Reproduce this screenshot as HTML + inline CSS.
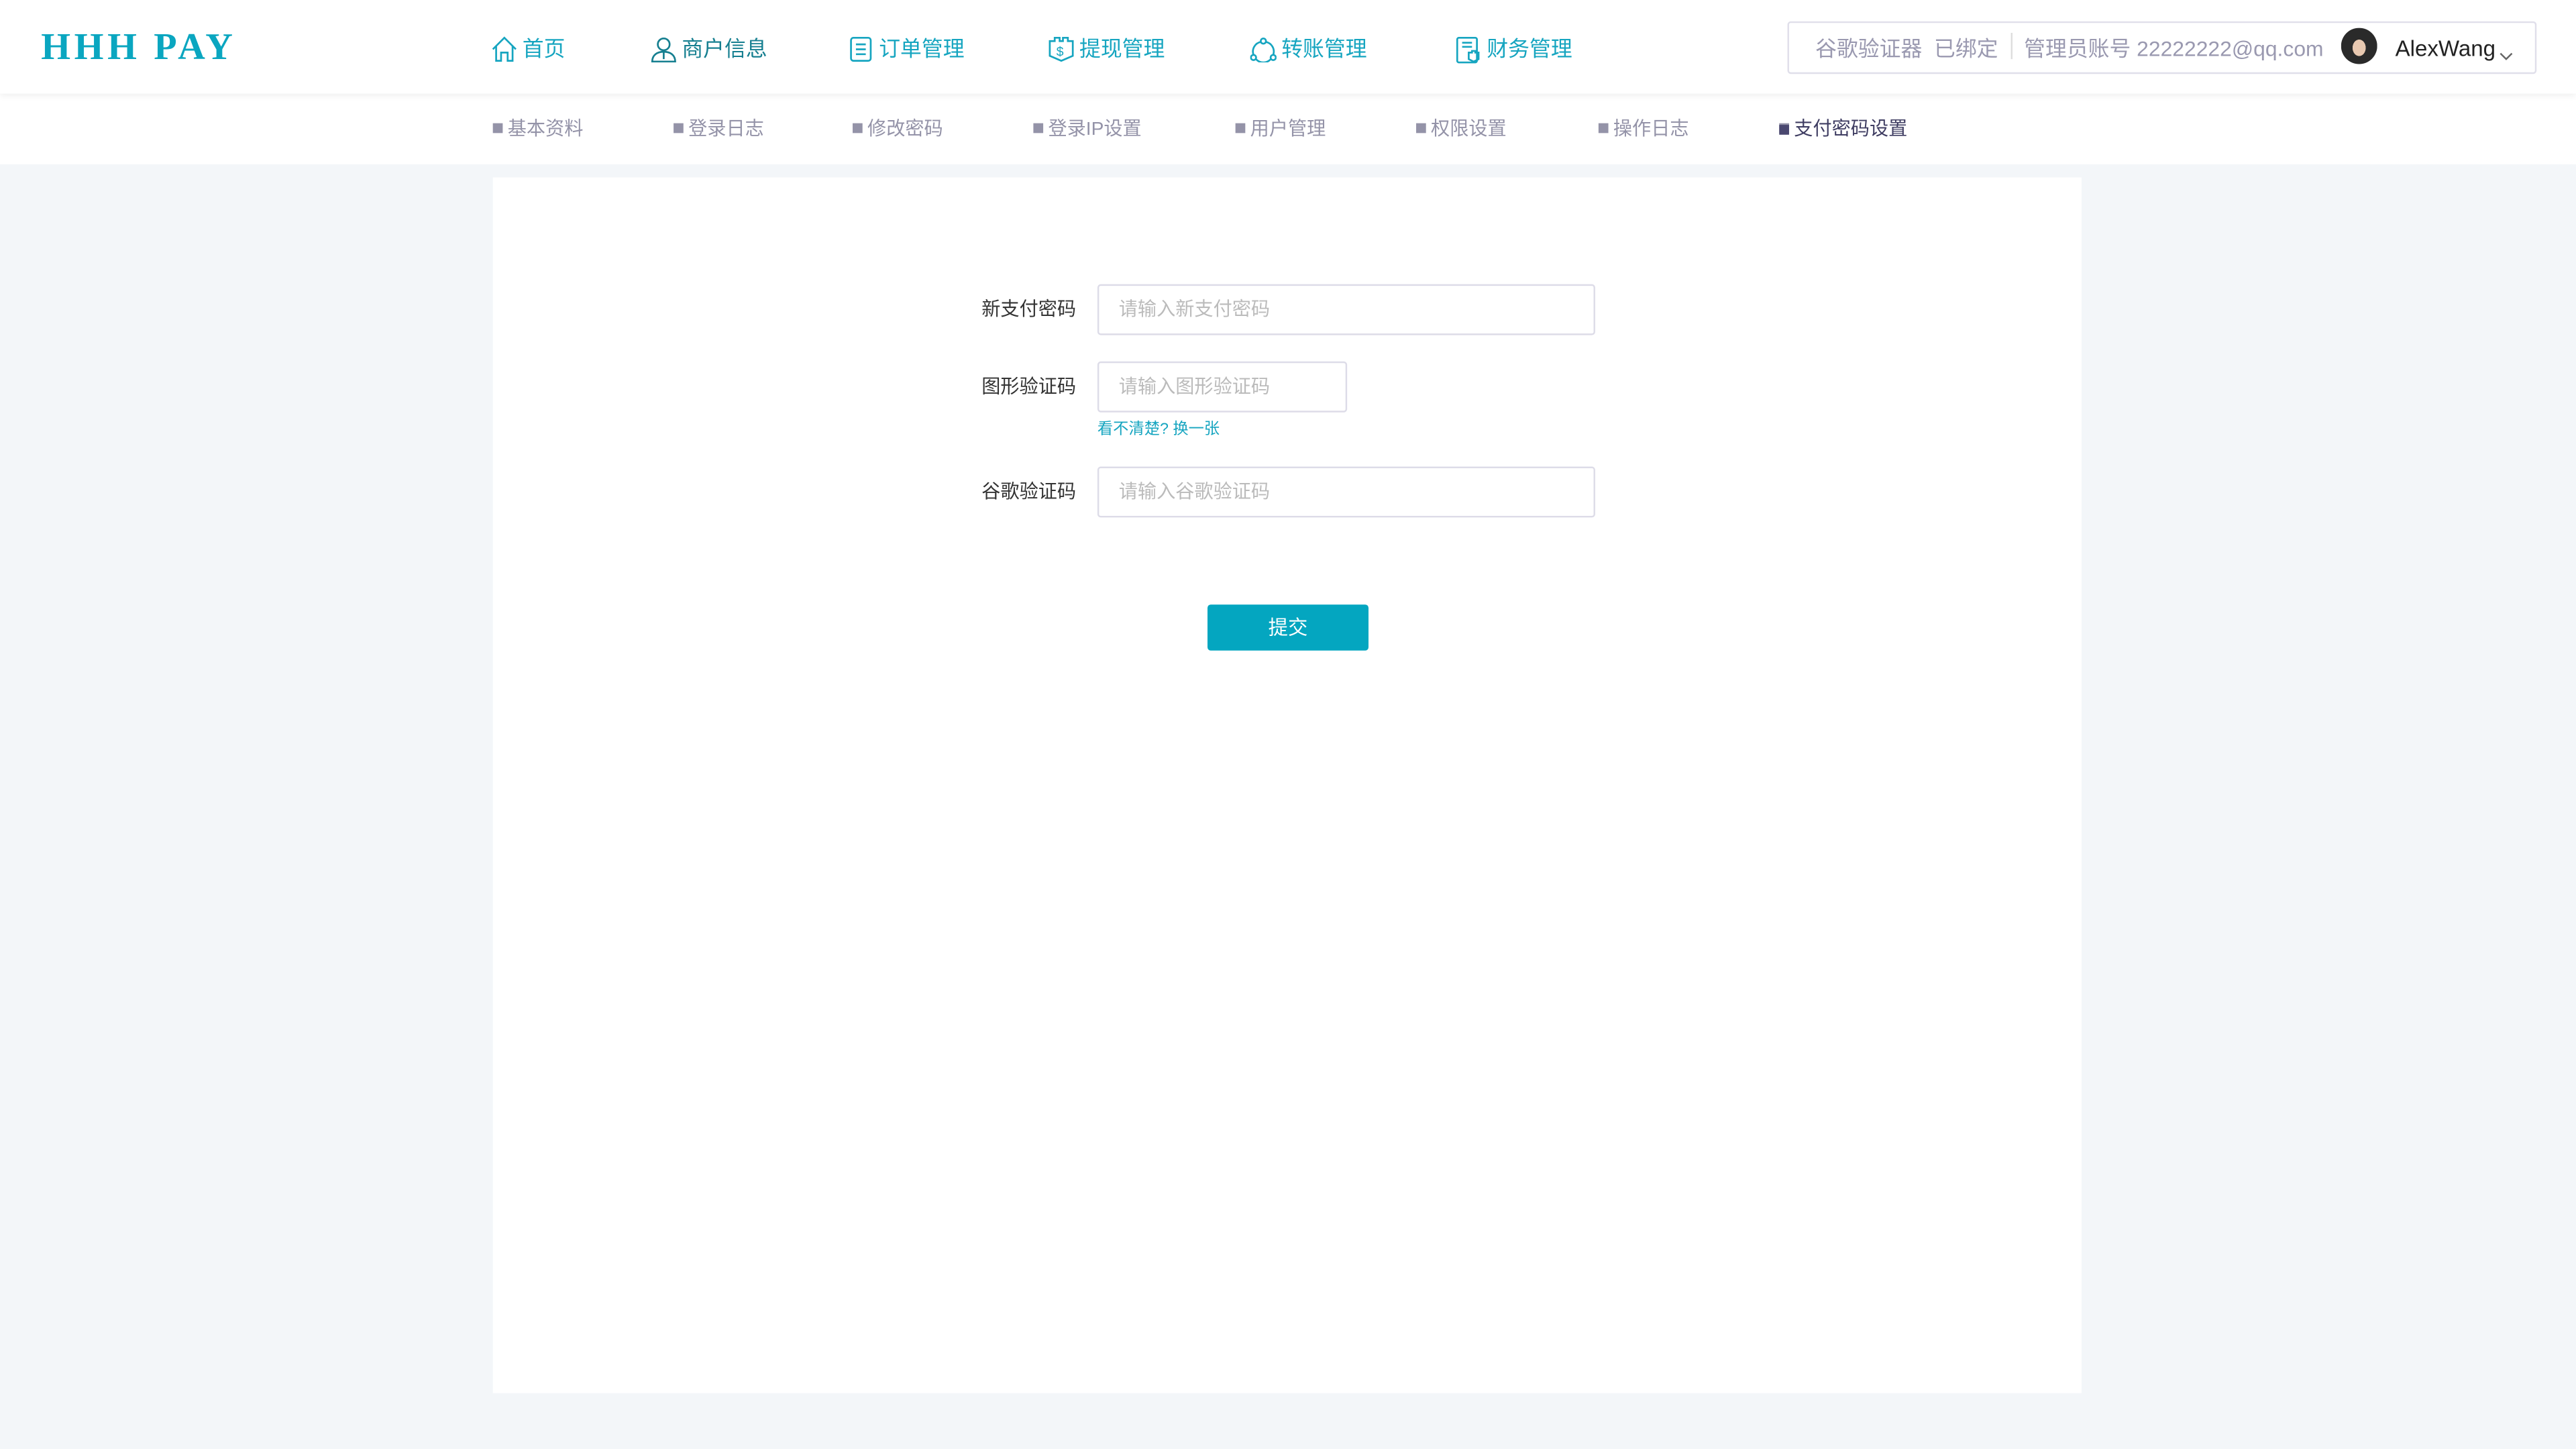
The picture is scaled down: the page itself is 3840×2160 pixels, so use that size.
<!DOCTYPE html>
<html><head><meta charset="utf-8"><style>
html,body{margin:0;padding:0;width:3840px;height:2160px;overflow:hidden;background:#f3f6f9}
#s{position:absolute;left:0;top:0;width:1568px;height:882px;transform:scale(2.44898);transform-origin:0 0;font-family:"Liberation Sans","Noto Sans CJK SC",sans-serif;background:#f3f6f9}
.a{position:absolute;white-space:nowrap}
.hd{left:0;top:0;width:1568px;height:57px;background:#fff;box-shadow:0 1px 4px rgba(0,0,0,.08);z-index:2}
.sub{left:0;top:57px;width:1568px;height:43px;background:#fff}
.nav{font-size:13px;color:#16a5c0;top:21px;line-height:18px;display:flex;align-items:center}
.nav svg{margin-right:3px}
.si{font-size:11.5px;color:#9493a8;top:71px;line-height:16px}
.si:before{content:"";display:inline-block;width:6px;height:6px;background:#9493a8;margin-right:3px;vertical-align:1px}
.lb{font-size:11.5px;color:#333;width:100px;text-align:right;left:555px;line-height:16px}
.in{left:668px;height:29px;border:1px solid #dddce8;border-radius:2px;background:#fff;font-size:11.5px;color:#bbb;line-height:30px;padding-left:12px;box-sizing:content-box}
</style></head><body><div id="s">
<div class="a hd"></div>
<div class="a" style="left:25px;top:16px;font-family:'Liberation Serif',serif;font-weight:bold;font-size:23px;color:#0aa6c0;z-index:3;letter-spacing:2.3px">HHH PAY</div>
<div class="a nav" style="left:299px;z-index:3"><svg width="16" height="16" viewBox="0 0 16 16" fill="none" stroke="#16a5c0" stroke-width="1.1"><path d="M1 8L8 1l7 7M3 6v9h3v-5h4v5h3V6"/></svg>首页</div>
<div class="a nav" style="left:396px;color:#167f90;z-index:3"><svg width="16" height="16" viewBox="0 0 16 16" fill="none" stroke="#167f90" stroke-width="1.1"><circle cx="8" cy="5" r="3.6"/><path d="M1 15.5c0-4 3-6 7-6s7 2 7 6zM8 10v4"/></svg>商户信息</div>
<div class="a nav" style="left:517px;z-index:3"><svg width="15" height="16" viewBox="0 0 15 16" fill="none" stroke="#16a5c0" stroke-width="1.1"><rect x="1" y="1" width="12" height="14" rx="1.5"/><path d="M4 5h6M4 8h6M4 11h6"/></svg>订单管理</div>
<div class="a nav" style="left:638px;z-index:3"><svg width="16" height="16" viewBox="0 0 16 16" fill="none" stroke="#16a5c0" stroke-width="1.1"><path d="M1 3h3V1h3v2h2V1h3v2h3v9l-7 3-7-3z"/><text x="5" y="12" font-size="8" fill="#16a5c0" stroke="none">$</text></svg>提现管理</div>
<div class="a nav" style="left:761px;z-index:3"><svg width="16" height="16" viewBox="0 0 16 16" fill="none" stroke="#16a5c0" stroke-width="1.1"><circle cx="8" cy="3" r="1.6"/><circle cx="2" cy="13" r="1.6"/><circle cx="14" cy="13" r="1.6"/><path d="M6.5 3.5A6 6 0 0 0 2 11.4M9.5 3.5A6 6 0 0 1 14 11.4M3.5 14a6 6 0 0 0 9 0"/></svg>转账管理</div>
<div class="a nav" style="left:886px;z-index:3"><svg width="16" height="17" viewBox="0 0 16 17" fill="none" stroke="#16a5c0" stroke-width="1.1"><rect x="1" y="1" width="12" height="15" rx="1"/><path d="M4 4h6M4 6.5h6M8 10h2v-1h2v1h2v4l-3 1.5-3-1.5z"/></svg>财务管理</div>
<div class="a" style="left:1088px;top:13px;width:454px;height:30px;border:1px solid #e0dfea;border-radius:2px;z-index:3;background:#fff"></div>
<div class="a" style="left:1105px;top:21px;font-size:13px;color:#9a99b0;z-index:3;line-height:17px">谷歌验证器&nbsp;&nbsp;已绑定</div>
<div class="a" style="left:1224px;top:20px;width:1px;height:16px;background:#ddd;z-index:3"></div>
<div class="a" style="left:1232px;top:21px;font-size:13px;color:#9a99b0;z-index:3;line-height:17px">管理员账号 22222222@qq.com</div>
<div class="a" style="left:1425px;top:17px;width:22px;height:22px;border-radius:50%;background:radial-gradient(ellipse 40% 50% at 50% 55%,#e8c8b0 0 45%,#2a2a2a 46% 100%),#b9c3cb;z-index:3"></div>
<div class="a" style="left:1458px;top:21px;font-size:13.5px;color:#222;z-index:3;line-height:17px">AlexWang</div>
<div class="a" style="left:1521px;top:25px;z-index:3"><svg width="9" height="7" viewBox="0 0 9 7"><path d="M1 1.5l3.5 3.5 3.5-3.5" fill="none" stroke="#666" stroke-width="1"/></svg></div>
<div class="a sub"></div>
<div class="a si" style="left:300px">基本资料</div>
<div class="a si" style="left:410px">登录日志</div>
<div class="a si" style="left:519px">修改密码</div>
<div class="a si" style="left:629px">登录IP设置</div>
<div class="a si" style="left:752px">用户管理</div>
<div class="a si" style="left:862px">权限设置</div>
<div class="a si" style="left:973px">操作日志</div>
<div class="a si" style="left:1083px;color:#3f3d62">支付密码设置</div>
<div class="a" style="left:1083px;top:76px;width:6px;height:6px;background:#4a4870"></div>
<div class="a" style="left:300px;top:108px;width:967px;height:740px;background:#fff"></div>
<div class="a lb" style="top:181px">新支付密码</div>
<div class="a in" style="top:173px;width:289px">请输入新支付密码</div>
<div class="a lb" style="top:228px">图形验证码</div>
<div class="a in" style="top:220px;width:138px">请输入图形验证码</div>
<div class="a" style="left:668px;top:255px;font-size:9.5px;color:#16a5c0;line-height:13px">看不清楚? 换一张</div>
<div class="a lb" style="top:292px">谷歌验证码</div>
<div class="a in" style="top:284px;width:289px">请输入谷歌验证码</div>
<div class="a" style="left:735px;top:368px;width:98px;height:28px;background:#04a6c0;border-radius:2px;color:#fff;font-size:12px;line-height:28px;text-align:center">提交</div>
</div></body></html>
